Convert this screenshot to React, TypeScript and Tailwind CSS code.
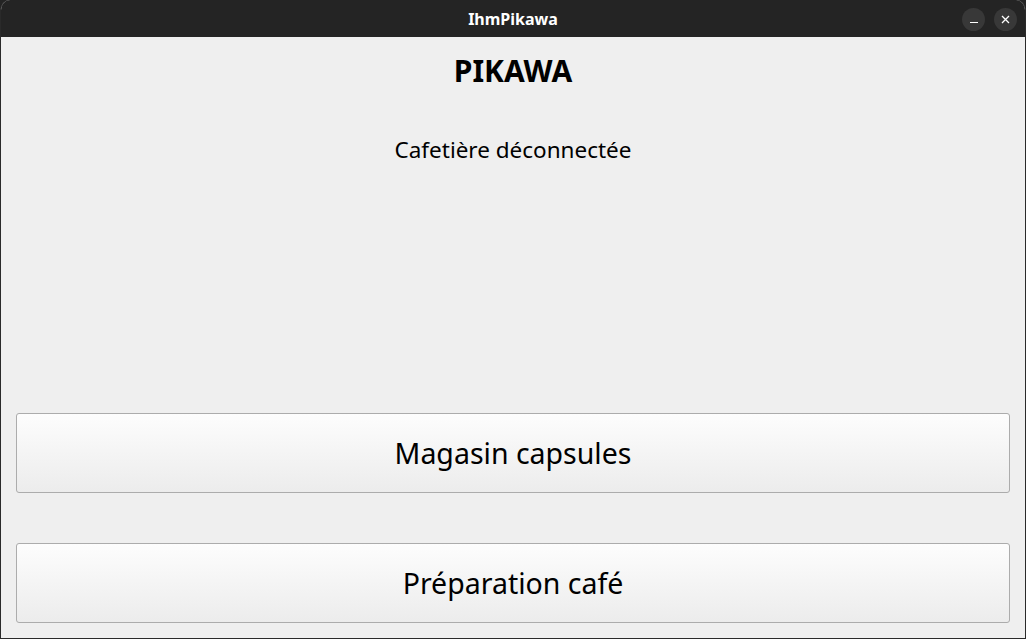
export default function App() {
  const font = { fontFamily: '"Noto Sans", "Open Sans", sans-serif' }

  return (
    <div className="h-[639px] w-[1026px] overflow-hidden bg-[#242424]" style={font}>
      <div className="flex h-full flex-col overflow-hidden rounded-t-[10px] border border-t-0 border-[#2a2a2a] bg-[#efefef]">
        {/* barre de titre */}
        <div className="relative flex h-[37px] shrink-0 items-center justify-center bg-[#242424]">
          <span className="text-[16px] font-bold text-[#ffffff]">IhmPikawa</span>
          <div className="absolute right-[8px] top-[8px] flex gap-[9px]">
            <div className="flex h-[23px] w-[23px] items-center justify-center rounded-full bg-[#383838]">
              <div className="mt-[5px] h-px w-[8px] bg-white" />
            </div>
            <div className="flex h-[23px] w-[23px] items-center justify-center rounded-full bg-[#383838]">
              <svg width="9" height="9" viewBox="0 0 9 9" stroke="white" strokeWidth="1.3">
                <path d="M1 1 L8 8 M8 1 L1 8" />
              </svg>
            </div>
          </div>
        </div>

        <div className="flex flex-1 flex-col px-[15px] pb-[15px]">
          <h1 className="mt-[14px] text-center text-[30px] font-bold leading-[40px] text-black">PIKAWA</h1>
          <p className="mt-[44px] text-center text-[22.5px] leading-[30px] text-black">Cafetière déconnectée</p>

          <div className="mt-auto flex flex-col gap-[50px]">
            <button className="h-[80px] w-full rounded-[3px] border border-[#acacac] bg-gradient-to-b from-[#fdfdfd] to-[#ececec] text-[28.5px] text-black">
              Magasin capsules
            </button>
            <button className="h-[80px] w-full rounded-[3px] border border-[#acacac] bg-gradient-to-b from-[#fdfdfd] to-[#ececec] text-[28.5px] text-black">
              Préparation café
            </button>
          </div>
        </div>
      </div>
    </div>
  )
}
